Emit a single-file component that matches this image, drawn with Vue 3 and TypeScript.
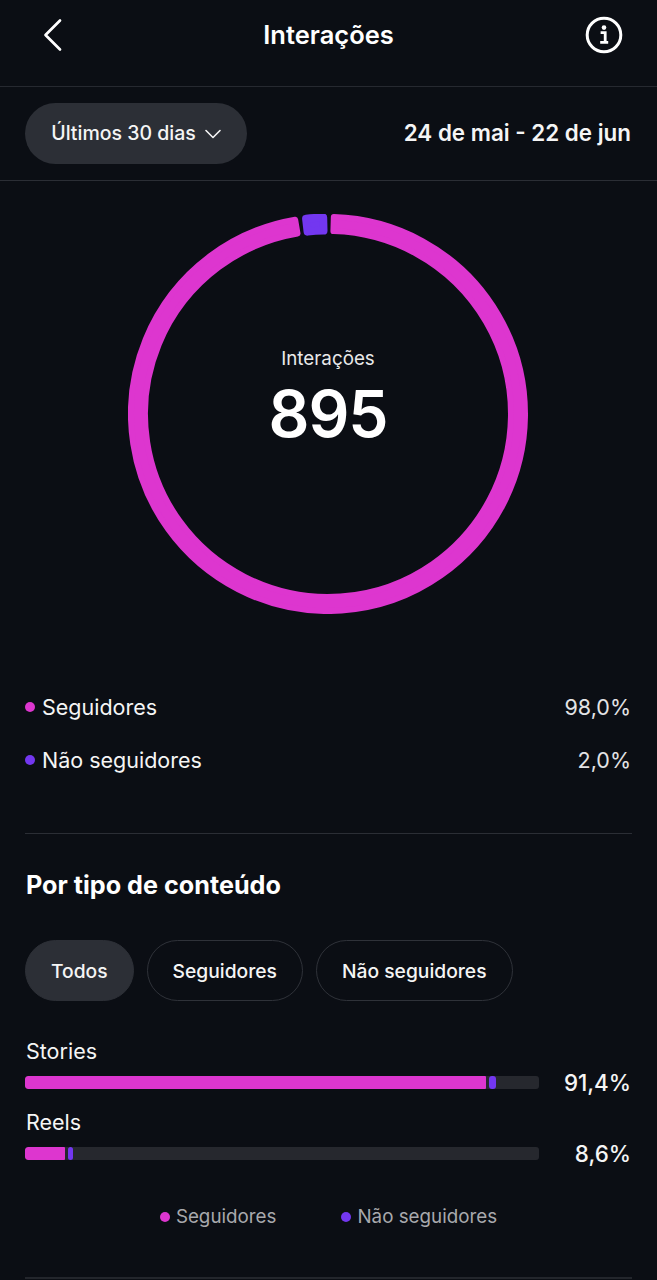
<script setup lang="ts">
interface Row { label: string; value: string; pink: number; purple: number }
const legend = [
  { label: 'Seguidores', value: '98,0%', kind: 'pink' },
  { label: 'Não seguidores', value: '2,0%', kind: 'purple' },
]
const rows: Row[] = [
  { label: 'Stories', value: '91,4%', pink: 461, purple: 7 },
  { label: 'Reels', value: '8,6%', pink: 40, purple: 5 },
]

function pt(r: number, deg: number): string {
  const a = (deg * Math.PI) / 180
  return `${(200 + r * Math.sin(a)).toFixed(2)} ${(200 - r * Math.cos(a)).toFixed(2)}`
}
function sector(from: number, to: number, outer: number, inner: number): string {
  const large = to - from > 180 ? 1 : 0
  return `M${pt(outer, from)} A${outer} ${outer} 0 ${large} 1 ${pt(outer, to)} L${pt(inner, to)} A${inner} ${inner} 0 ${large} 0 ${pt(inner, from)} Z`
}
const pinkArc = sector(1.7, 350.4, 197, 183)
const purpleArc = sector(-6.4, -1.4, 196.5, 183.5)
</script>

<template>
  <div class="page">
    <header class="top">
      <svg class="back" width="20" height="34" viewBox="0 0 20 34" fill="none">
        <path d="M17 2.5 L2.5 17 L17 31.5" stroke="#fff" stroke-width="2.7" stroke-linecap="round" stroke-linejoin="round" />
      </svg>
      <h1>Interações</h1>
      <svg class="info" width="38" height="38" viewBox="0 0 38 38" fill="none">
        <circle cx="19" cy="19" r="16.8" stroke="#fff" stroke-width="3" />
        <circle cx="19" cy="11.6" r="2.3" fill="#fff" />
        <path d="M15.6 16.6h4.6v9.4M15.2 26.4h8" stroke="#fff" stroke-width="2.8" />
      </svg>
    </header>

    <section class="range">
      <div class="pill">
        <span>Últimos 30 dias</span>
        <svg width="16" height="10" viewBox="0 0 16 10" fill="none">
          <path d="M1 1.5 L8 8.5 L15 1.5" stroke="#f5f5f5" stroke-width="1.6" stroke-linecap="round" stroke-linejoin="round" />
        </svg>
      </div>
      <strong>24 de mai - 22 de jun</strong>
    </section>

    <section class="donut">
      <svg width="400" height="400" viewBox="0 0 400 400">
        <path :d="pinkArc" fill="#dd36cf" stroke="#dd36cf" stroke-width="6" stroke-linejoin="round" />
        <path :d="purpleArc" fill="#7337f0" stroke="#7337f0" stroke-width="8" stroke-linejoin="round" />
      </svg>
      <div class="center">
        <span>Interações</span>
        <b>895</b>
      </div>
    </section>

    <ul class="legend">
      <li v-for="item in legend" :key="item.label">
        <span class="name"><i :class="item.kind"></i>{{ item.label }}</span>
        <span>{{ item.value }}</span>
      </li>
    </ul>

    <section class="content">
      <h2>Por tipo de conteúdo</h2>
      <div class="chips">
        <span class="chip active">Todos</span>
        <span class="chip">Seguidores</span>
        <span class="chip">Não seguidores</span>
      </div>
      <div class="rows">
        <div v-for="row in rows" :key="row.label" class="row">
          <div class="row-main">
            <span class="row-label">{{ row.label }}</span>
            <div class="track">
              <div class="seg pink" :style="{ width: row.pink + 'px' }"></div>
              <div class="seg purple" :style="{ width: row.purple + 'px' }"></div>
            </div>
          </div>
          <span class="row-value">{{ row.value }}</span>
        </div>
      </div>
      <div class="key">
        <span><i class="pink"></i>Seguidores</span>
        <span><i class="purple"></i>Não seguidores</span>
      </div>
    </section>
  </div>
</template>

<style>
html, body { margin: 0; background: #0b0e14; }
</style>

<style scoped>
.page {
  width: 657px;
  height: 1280px;
  overflow: hidden;
  background: #0b0e14;
  color: #f5f5f5;
  font-family: Inter, "Noto Sans", sans-serif;
  box-sizing: border-box;
  position: relative;
}
.top {
  height: 87px;
  box-sizing: border-box;
  border-bottom: 1px solid #262930;
  display: flex;
  align-items: center;
  justify-content: space-between;
  padding: 0 34px 17px 43px;
  position: relative;
}
.top h1 {
  position: absolute;
  left: 0;
  right: 0;
  top: 19px;
  margin: 0;
  text-align: center;
  font-size: 25.5px;
  line-height: 32px;
  font-weight: 600;
  color: #fff;
}
.back { margin-top: 1px; }
.range {
  height: 94px;
  box-sizing: border-box;
  border-bottom: 1px solid #2b2e35;
  display: flex;
  align-items: center;
  justify-content: space-between;
  padding: 0 26px 0 25px;
}
.pill {
  width: 222px;
  height: 61px;
  box-sizing: border-box;
  border-radius: 31px;
  background: #2c2f36;
  display: flex;
  align-items: center;
  justify-content: center;
  gap: 9px;
  font-size: 19.5px;
  font-weight: 500;
}
.pill span { margin-top: -2px; }
.range strong { font-size: 22.4px; font-weight: 600; margin-top: -2px; }
.donut {
  position: relative;
  width: 400px;
  height: 400px;
  margin: 33px 0 0 128px;
}
.donut svg { display: block; }
.center {
  position: absolute;
  inset: 0;
  display: flex;
  flex-direction: column;
  align-items: center;
  justify-content: center;
  padding-bottom: 30px;
}
.center span { font-size: 18.8px; line-height: 24px; color: #e9e9ea; }
.center b { font-size: 64px; line-height: 76px; font-weight: 600; color: #fff; margin-top: 5px; letter-spacing: -1px; }
.legend {
  list-style: none;
  margin: 78px 25px 0 25px;
  padding: 0 1px 58px 0;
  display: flex;
  flex-direction: column;
  gap: 23px;
  font-size: 21.5px;
  line-height: 30px;
  border-bottom: 1px solid #2b2e35;
}
.legend li { display: flex; justify-content: space-between; }
.legend li > span:last-child { color: #e3e3e5; }
.name { display: flex; align-items: center; gap: 7px; }
i { display: inline-block; width: 10px; height: 10px; border-radius: 50%; flex: none; }
.pink { background: #dd36cf; }
.purple { background: #7337f0; }
.content { padding: 0 26px 0 25px; }
h2 {
  margin: 34px 0 0 1px;
  font-size: 25.2px;
  line-height: 34px;
  font-weight: 700;
  color: #fff;
}
.chips { display: flex; gap: 13px; margin-top: 38px; }
.chip {
  height: 61px;
  box-sizing: border-box;
  border: 1.5px solid #2f3239;
  border-radius: 31px;
  padding: 0 25px;
  display: flex;
  align-items: center;
  font-size: 19.25px;
  font-weight: 500;
}
.chip.active { background: #2c2f36; border-color: #2c2f36; }
.rows { margin-top: 36px; display: flex; flex-direction: column; gap: 19px; }
.row { display: flex; align-items: flex-end; justify-content: space-between; }
.row-main { width: 514px; display: flex; flex-direction: column; gap: 11px; }
.row-label { font-size: 21.5px; line-height: 28px; padding-left: 1px; }
.track {
  height: 13px;
  border-radius: 3px;
  background: #26282e;
  display: flex;
  overflow: hidden;
}
.seg.pink { border-radius: 3px 1px 1px 3px; }
.seg.purple { margin-left: 3px; border-radius: 3px; }
.row-value {
  font-size: 22.4px;
  line-height: 28px;
  font-weight: 500;
  margin-bottom: -8px;
  padding-left: 1px;
}
.key {
  margin-top: 44px;
  display: flex;
  justify-content: center;
  gap: 65px;
  padding-left: 1px;
  font-size: 18.8px;
  line-height: 26px;
  color: #a8a9ad;
}
.key span { display: flex; align-items: center; gap: 6px; }
.page::after {
  content: "";
  position: absolute;
  left: 25px;
  right: 25px;
  top: 1277px;
  height: 2px;
  background: #23262c;
}
</style>
